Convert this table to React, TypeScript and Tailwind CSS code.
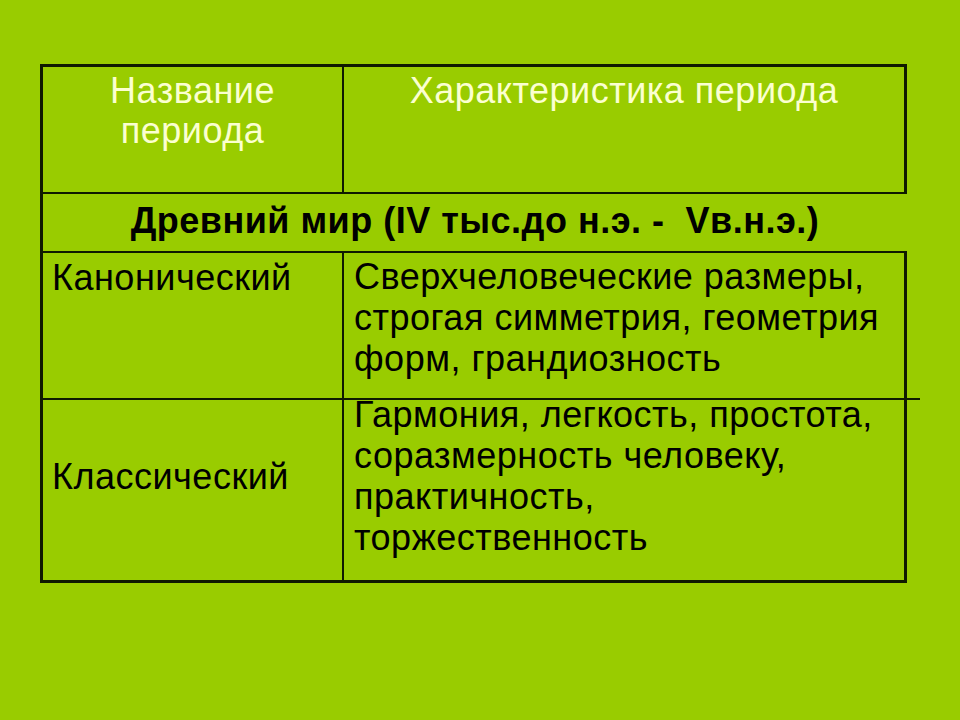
const font = { fontFamily: '"Liberation Sans", Arial, sans-serif' };

const App = () => {
  return (
    <div
      className="w-[960px] h-[720px] bg-[#99cc00] pt-[64px] pl-[40px] overflow-hidden"
      style={font}
    >
      <div className="w-[867px] flex flex-col text-black text-[36px] tracking-[0.5px]">
        {/* header row */}
        <div className="flex h-[130px] border-[3px] border-b-2 border-[#0f1a00]">
          <div className="w-[301px] border-r-2 border-[#0f1a00] pt-[4px] text-center leading-[40px] text-[#fbffd0]">
            Название
            <br />
            периода
          </div>
          <div className="flex-1 pt-[4px] text-center leading-[40px] text-[#fbffd0]">
            Характеристика периода
          </div>
        </div>

        {/* era row, no right border */}
        <div className="flex h-[59px] items-center justify-center border-l-[3px] border-b-2 border-[#0f1a00] pb-[3px]">
          <span className="font-bold leading-[40px] whitespace-pre">
            Древний мир (IV тыс.до н.э. -  Vв.н.э.)
          </span>
        </div>

        {/* canonical */}
        <div className="flex h-[145px] border-x-[3px] border-[#0f1a00]">
          <div className="w-[301px] border-r-2 border-[#0f1a00] pl-[9px] pt-[4px] leading-[41px]">
            Канонический
          </div>
          <div className="flex-1 pl-[10px] pt-[3px] leading-[41px]">
            Сверхчеловеческие размеры,
            <br />
            строгая симметрия, геометрия
            <br />
            форм, грандиозность
          </div>
        </div>

        {/* classical */}
        <div className="relative flex h-[185px] border-[3px] border-t-2 border-[#0f1a00]">
          <span className="absolute -top-[2px] -right-[16px] h-[2px] w-[14px] bg-[#0f1a00]" />
          <div className="w-[301px] border-r-2 border-[#0f1a00] pl-[9px] pt-[56px] leading-[41px]">
            Классический
          </div>
          <div className="flex-1 pl-[10px] -mt-[6px] leading-[41px]">
            Гармония, легкость, простота,
            <br />
            соразмерность человеку,
            <br />
            практичность,
            <br />
            торжественность
          </div>
        </div>
      </div>
    </div>
  );
};

export default App;
